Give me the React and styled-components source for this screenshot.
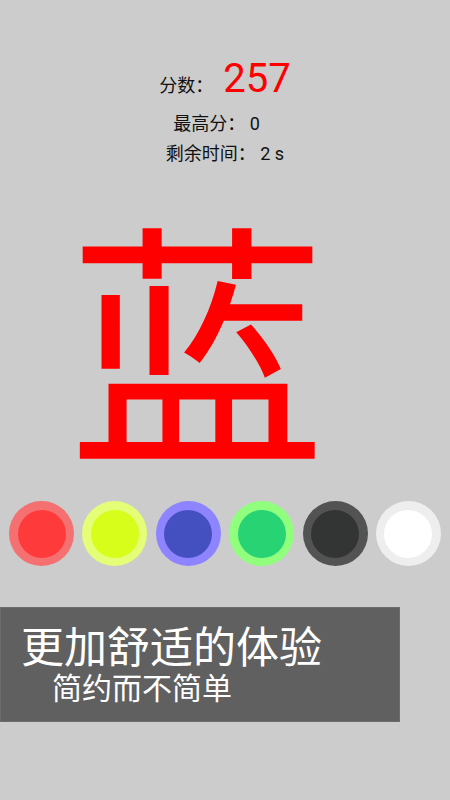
import React from "react";
import styled, { createGlobalStyle } from "styled-components";

const GlobalStyle = createGlobalStyle`
  html, body {
    margin: 0;
    padding: 0;
    background: #cccccc;
  }
  body {
    font-family: Roboto, "Noto Sans CJK SC", sans-serif;
  }
`;

const Screen = styled.div`
  width: 450px;
  height: 800px;
  background: #cccccc;
  display: flex;
  flex-direction: column;
  align-items: center;
  overflow: hidden;
`;

const ScoreRow = styled.div`
  margin-top: 55px;
  display: flex;
  align-items: baseline;
  height: 50px;
`;

const Label = styled.span`
  font-size: ${(p) => p.size || 16}px;
  color: #111;
`;

const Score = styled.span`
  font-size: 40px;
  color: #ff0000;
  margin-left: 10px;
`;

const InfoBlock = styled.div`
  margin-top: 4px;
  display: flex;
  flex-direction: column;
  align-items: center;
`;

const InfoLine = styled.div`
  font-size: 18px;
  color: #111;
  line-height: 30px;
  padding-right: ${(p) => p.shift || 0}px;
`;

const BigChar = styled.div`
  align-self: flex-start;
  margin-top: 19px;
  padding-left: 68px;
  font-size: 258px;
  line-height: 290px;
  height: 290px;
  color: #ff0000;
  font-family: "Noto Sans CJK SC", sans-serif;
`;

const Palette = styled.div`
  align-self: stretch;
  display: flex;
  justify-content: space-between;
  padding: 0 9px;
  margin-top: 23px;
`;

const Dot = styled.div`
  width: 65px;
  height: 65px;
  border-radius: 50%;
  background: ${(p) => p.outer};
  display: flex;
  align-items: center;
  justify-content: center;
  &::after {
    content: "";
    width: 48px;
    height: 48px;
    border-radius: 50%;
    background: ${(p) => p.inner};
  }
`;

const Banner = styled.div`
  align-self: flex-start;
  margin-top: 41px;
  width: 400px;
  height: 115px;
  box-sizing: border-box;
  background: #606060;
  border: 1px solid #6c6c6c;
  color: #ffffff;
  font-family: "Noto Sans CJK SC", sans-serif;
  padding: 12px 0 0 20px;
`;

const Headline = styled.div`
  font-size: 43px;
  line-height: 48px;
`;

const Subline = styled.div`
  font-size: 30px;
  line-height: 36px;
  padding-left: 31px;
`;

const colors = [
  ["#f57070", "#ff3a3a"],
  ["#e4fe78", "#d6fe1a"],
  ["#8e84ff", "#4450c0"],
  ["#90ff7e", "#28d374"],
  ["#535353", "#333535"],
  ["#eeeeee", "#ffffff"],
];

export default function App() {
  return (
    <>
      <GlobalStyle />
      <Screen>
        <ScoreRow>
          <Label size={18}>分数：</Label>
          <Score>257</Score>
        </ScoreRow>
        <InfoBlock>
          <InfoLine shift={17}>最高分：&nbsp;0</InfoLine>
          <InfoLine>剩余时间：&nbsp;2 s</InfoLine>
        </InfoBlock>
        <BigChar>蓝</BigChar>
        <Palette>
          {colors.map(([o, i], idx) => (
            <Dot key={idx} outer={o} inner={i} />
          ))}
        </Palette>
        <Banner>
          <Headline>更加舒适的体验</Headline>
          <Subline>简约而不简单</Subline>
        </Banner>
      </Screen>
    </>
  );
}
